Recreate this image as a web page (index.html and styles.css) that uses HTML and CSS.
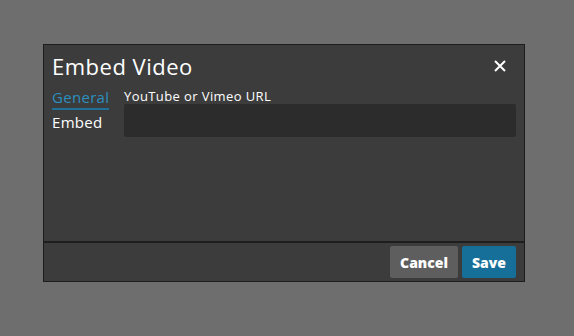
FILE: index.html
```html
<!DOCTYPE html>
<html lang="en">
<head>
    <meta charset="UTF-8">
    <title>Embed Video</title>
    <link rel="stylesheet" href="styles.css">
</head>
<body>

    <div class="dialog">
        <div class="dialog-header">
            <h2>Embed Video</h2>
            <button class="close" aria-label="Close">
                <svg width="12" height="12" viewBox="0 0 12 12"><path d="M1 1L11 11M11 1L1 11" stroke="#fff" stroke-width="2"/></svg>
            </button>
        </div>

        <div class="dialog-body">
            <ul class="tabs">
                <li class="active">General</li>
                <li>Embed</li>
            </ul>
            <div class="panel">
                <label for="url">YouTube or Vimeo URL</label>
                <input type="text" id="url">
            </div>
        </div>

        <div class="dialog-footer">
            <button class="btn cancel">Cancel</button>
            <button class="btn save">Save</button>
        </div>
    </div>

</body>
</html>
```

FILE: styles.css
```css
body {
    margin: 0;
    background: #6e6e6e;
    font-family: "Open Sans", Arial, sans-serif;
    color: #fff;
}
.dialog {
    margin: 44px 0 0 43px;
    width: 480px;
    height: 236px;
    background: #3c3c3c;
    border: 1px solid #1c1c1c;
    display: flex;
    flex-direction: column;
}
.dialog-header {
    display: flex;
    align-items: center;
    justify-content: space-between;
    padding: 2px 18px 0 8px;
    height: 38px;
}
h2 {
    margin: 0;
    font-size: 22px;
    font-weight: 500;
    letter-spacing: 0.5px;
}
.close {
    background: none;
    border: none;
    padding: 0;
    cursor: pointer;
    display: flex;
}
.dialog-body {
    flex: 1;
    display: flex;
    padding: 0 8px;
}
.tabs {
    list-style: none;
    margin: 0;
    padding: 0;
    width: 72px;
    font-size: 15px;
    letter-spacing: 0.3px;
}
.tabs li {
    line-height: 18px;
    margin-top: 3px;
    padding-bottom: 2px;
    display: table;
}
.tabs li.active {
    color: #2b8fbf;
    border-bottom: 2px solid #1f6f97;
}
.panel {
    flex: 1;
    display: flex;
    flex-direction: column;
}
label {
    font-size: 13px;
    letter-spacing: 0.4px;
    line-height: 16px;
    margin-top: 3px;
}
input {
    height: 31px;
    background: #2c2c2c;
    border: none;
    border-radius: 2px;
    outline: none;
    color: #fff;
}
.dialog-footer {
    border-top: 2px solid #1e1e1e;
    height: 38px;
    display: flex;
    justify-content: flex-end;
    align-items: center;
    gap: 4px;
    padding: 0 8px;
}
.btn {
    font-family: "Open Sans", Arial, sans-serif;
    font-weight: 800;
    font-size: 14px;
    color: #fff;
    border: none;
    border-radius: 2px;
    height: 32px;
    padding: 0 10px;
    cursor: pointer;
}
.cancel {
    background: #5e5e5e;
}
.save {
    background: #166f98;
}
```
